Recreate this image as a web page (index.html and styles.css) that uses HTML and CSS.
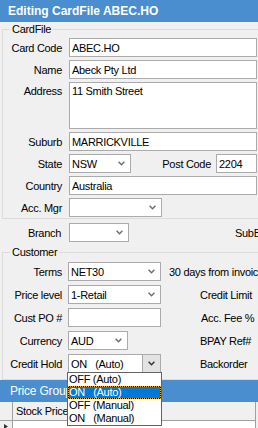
FILE: index.html
```html
<!DOCTYPE html>
<html>
<head>
<meta charset="utf-8">
<link rel="stylesheet" href="styles.css">
</head>
<body>
<header class="title">Editing CardFile ABEC.HO</header>

<fieldset class="group card-group">
	<legend>CardFile</legend>
	<div class="row">
		<label class="lbl">Card Code</label>
		<input class="txt" value="ABEC.HO">
	</div>
	<div class="row">
		<label class="lbl">Name</label>
		<input class="txt" value="Abeck Pty Ltd">
	</div>
	<div class="row row-tall">
		<label class="lbl">Address</label>
		<textarea class="txt area">11 Smith Street</textarea>
	</div>
	<div class="row">
		<label class="lbl">Suburb</label>
		<input class="txt" value="MARRICKVILLE">
	</div>
	<div class="row">
		<label class="lbl">State</label>
		<div class="select w-state"><span>NSW</span><span class="arrow"><svg width="7" height="5" viewBox="0 0 7 5"><path d="M0.6 0.8 L3.5 3.8 L6.4 0.8" fill="none" stroke="#6d6d6d" stroke-width="1.4"/></svg></span></div>
		<label class="lbl-mid">Post Code</label>
		<input class="txt post" value="2204">
	</div>
	<div class="row">
		<label class="lbl">Country</label>
		<input class="txt" value="Australia">
	</div>
	<div class="row last">
		<label class="lbl">Acc. Mgr</label>
		<div class="select w-wide"><span></span><span class="arrow"><svg width="7" height="5" viewBox="0 0 7 5"><path d="M0.6 0.8 L3.5 3.8 L6.4 0.8" fill="none" stroke="#6d6d6d" stroke-width="1.4"/></svg></span></div>
	</div>
</fieldset>

<div class="row branch-row">
	<label class="lbl">Branch</label>
	<div class="select w-small"><span></span><span class="arrow"><svg width="7" height="5" viewBox="0 0 7 5"><path d="M0.6 0.8 L3.5 3.8 L6.4 0.8" fill="none" stroke="#6d6d6d" stroke-width="1.4"/></svg></span></div>
	<span class="side side-branch">SubB</span>
</div>

<fieldset class="group cust-group">
	<legend>Customer</legend>
	<div class="row">
		<label class="lbl">Terms</label>
		<div class="select w-wide"><span>NET30</span><span class="arrow"><svg width="7" height="5" viewBox="0 0 7 5"><path d="M0.6 0.8 L3.5 3.8 L6.4 0.8" fill="none" stroke="#6d6d6d" stroke-width="1.4"/></svg></span></div>
		<span class="side side-terms">30 days from invoice</span>
	</div>
	<div class="row">
		<label class="lbl">Price level</label>
		<div class="select w-wide"><span>1-Retail</span><span class="arrow"><svg width="7" height="5" viewBox="0 0 7 5"><path d="M0.6 0.8 L3.5 3.8 L6.4 0.8" fill="none" stroke="#6d6d6d" stroke-width="1.4"/></svg></span></div>
		<span class="side">Credit Limit</span>
	</div>
	<div class="row">
		<label class="lbl">Cust PO #</label>
		<input class="txt w-po" value="">
		<span class="side">Acc. Fee %</span>
	</div>
	<div class="row">
		<label class="lbl">Currency</label>
		<div class="select w-small"><span>AUD</span><span class="arrow"><svg width="7" height="5" viewBox="0 0 7 5"><path d="M0.6 0.8 L3.5 3.8 L6.4 0.8" fill="none" stroke="#6d6d6d" stroke-width="1.4"/></svg></span></div>
		<span class="side">BPAY Ref#</span>
	</div>
	<div class="row last">
		<label class="lbl">Credit Hold</label>
		<div class="select w-wide open"><span class="pre">ON   (Auto)</span><span class="arrow"><svg width="7" height="5" viewBox="0 0 7 5"><path d="M0.6 0.8 L3.5 3.8 L6.4 0.8" fill="none" stroke="#333" stroke-width="1.4"/></svg></span></div>
		<span class="side">Backorder</span>
	</div>
</fieldset>

<div class="tabbar">Price Groups</div>
<div class="grid">
	<div class="grid-row grid-head">
		<div class="rowhdr"></div>
		<div class="cell">Stock Price</div>
	</div>
	<div class="grid-row grid-new">
		<div class="rowhdr"><svg width="4" height="5" viewBox="0 0 4 5"><path d="M0 0 L4 2.5 L0 5 Z" fill="#333"/></svg></div>
		<div class="cell"></div>
	</div>
</div>

<div class="droplist">
	<div class="opt">OFF (Auto)</div>
	<div class="opt sel">ON   (Auto)</div>
	<div class="opt">OFF (Manual)</div>
	<div class="opt">ON   (Manual)</div>
</div>
</body>
</html>
```

FILE: styles.css
```css
body {
	margin: 0;
	width: 258px;
	height: 428px;
	overflow: hidden;
	position: relative;
	background-color: #f0f0f0;
	font-family: "Liberation Sans", Arial, sans-serif;
	font-size: 11px;
	letter-spacing: -0.3px;
	color: #000;
}
.title {
	height: 22px;
	line-height: 22px;
	padding-left: 8px;
	background-color: #4a8ecf;
	color: #fff;
	font-size: 12px;
	font-weight: bold;
	letter-spacing: 0;
	white-space: nowrap;
}
.group {
	margin: 0 0 0 2px;
	padding: 2px 0 1px 0;
	border: 1px solid #dcdcdc;
	border-right: none;
	min-width: 0;
}
.group legend {
	margin-left: 7px;
	padding: 0 2px;
	line-height: 14px;
}
.cust-group {
	margin-top: 1px;
	padding: 3px 0 6px 0;
}
.row {
	display: flex;
	align-items: center;
	height: 19px;
	margin-bottom: 3px;
	white-space: nowrap;
}
.cust-group .row {
	margin-bottom: 4px;
}
.row.last,
.cust-group .row.last {
	margin-bottom: 0;
}
.row-tall {
	height: 47px;
	align-items: flex-start;
}
.row-tall .lbl {
	padding-top: 3px;
}
.lbl {
	width: 59px;
	margin-right: 7px;
	text-align: right;
	flex-shrink: 0;
}
.cust-group .lbl {
	margin-right: 6px;
}
.branch-row {
	margin-top: 4px;
}
.branch-row .lbl {
	width: 61px;
	margin-right: 8px;
}
.txt {
	flex: 1;
	min-width: 0;
	height: 19px;
	box-sizing: border-box;
	margin: 0 1px 0 0;
	padding: 0 2px;
	border: 1px solid #ababab;
	background: #fff;
	font: inherit;
	letter-spacing: inherit;
	color: #000;
	outline: none;
}
.area {
	height: 47px;
	resize: none;
	padding: 2px 2px;
	overflow: hidden;
}
.w-po {
	flex: none;
	width: 93px;
}
.select {
	display: flex;
	align-items: center;
	height: 19px;
	box-sizing: border-box;
	flex-shrink: 0;
	border: 1px solid #ababab;
	background: #fff;
	padding-left: 2px;
}
.select .arrow {
	margin-left: auto;
	width: 17px;
	height: 17px;
	display: flex;
	align-items: center;
	justify-content: center;
}
.select.open .arrow {
	background: #e3e3e3;
	border-left: 1px solid #ababab;
}
.pre {
	white-space: pre;
}
.w-state {
	width: 62px;
}
.w-small {
	width: 60px;
}
.w-wide {
	width: 93px;
}
.lbl-mid {
	flex: 1;
	text-align: right;
	margin-right: 5px;
}
.txt.post {
	flex: none;
	width: 41px;
}
.side {
	margin-left: 39px;
}
.cust-group .w-small + .side {
	margin-left: 72px;
}
.side-terms {
	margin-left: 8px;
}
.side-branch {
	margin-left: 106px;
}
.tabbar {
	height: 22px;
	line-height: 22px;
	padding-left: 10px;
	background-color: #4a8ecf;
	color: #fff;
	font-size: 12px;
	letter-spacing: -0.2px;
}
.grid {
	margin-right: 2px;
	border-right: 1px solid #a0a0a0;
}
.grid-row {
	display: flex;
}
.grid-head {
	height: 18px;
	border-bottom: 1px solid #a0a0a0;
}
.grid-new {
	height: 10px;
}
.rowhdr {
	width: 13px;
	flex-shrink: 0;
	border-right: 1px solid #a0a0a0;
	display: flex;
	align-items: flex-end;
	justify-content: center;
	padding-bottom: 2px;
	box-sizing: border-box;
}
.cell {
	flex: 1;
	padding-left: 3px;
	line-height: 18px;
}
.grid-new .cell {
	background: #fff;
}
.droplist {
	position: absolute;
	left: 67px;
	top: 372px;
	width: 95px;
	height: 54px;
	box-sizing: border-box;
	border: 1px solid #646464;
	background: #fff;
}
.opt {
	height: 13px;
	line-height: 13px;
	padding-left: 1px;
	white-space: pre;
}
.opt.sel {
	background: #0078d7;
	color: #fff;
	box-shadow: inset 0 0 0 1px #000;
	outline: 1px dotted #f5a623;
	outline-offset: -1px;
}
```
